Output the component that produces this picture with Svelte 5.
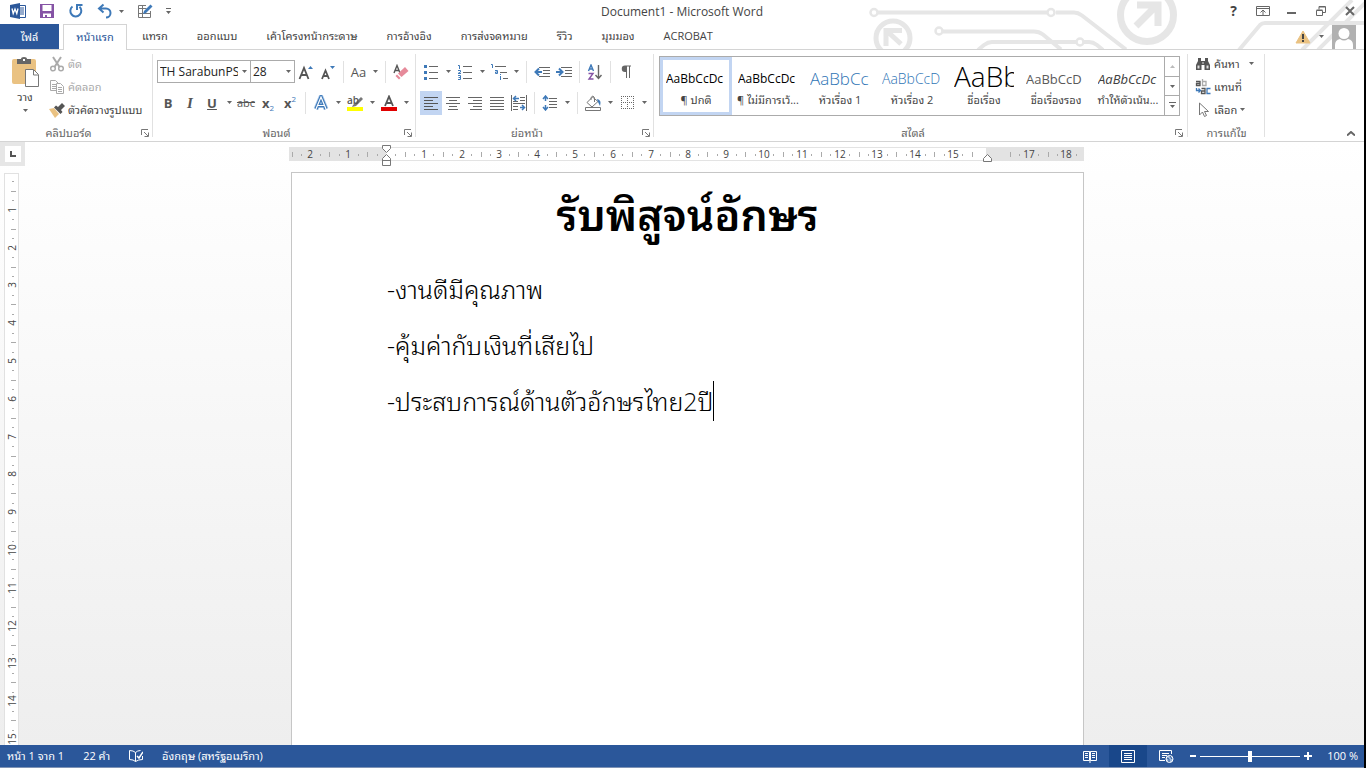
<script lang="ts">
  type Style = { sample: string; name: string; kind: string };

  const tabs = ['แทรก', 'ออกแบบ', 'เค้าโครงหน้ากระดาษ', 'การอ้างอิง', 'การส่งจดหมาย', 'รีวิว', 'มุมมอง', 'ACROBAT'];

  const styles: Style[] = [
    { sample: 'AaBbCcDc', name: '¶ ปกติ', kind: 'normal' },
    { sample: 'AaBbCcDc', name: '¶ ไม่มีการเว้...', kind: 'normal' },
    { sample: 'AaBbCc', name: 'หัวเรื่อง 1', kind: 'heading1' },
    { sample: 'AaBbCcD', name: 'หัวเรื่อง 2', kind: 'heading2' },
    { sample: 'AaBb', name: 'ชื่อเรื่อง', kind: 'title' },
    { sample: 'AaBbCcD', name: 'ชื่อเรื่องรอง', kind: 'subtitle' },
    { sample: 'AaBbCcDc', name: 'ทำให้ตัวเน้น...', kind: 'emphasis' },
  ];

  const lines = ['-งานดีมีคุณภาพ', '-คุ้มค่ากับเงินที่เสียไป', '-ประสบการณ์ด้านตัวอักษรไทย2ปี'];

  let selected = $state(0);
  let zoom = $state(100);

  // ruler steps are quarters of a centimetre, 378px for every 10cm
  const place = (quarter: number, origin: number) => origin + Math.round((quarter * 378) / 40);

  const across = Array.from({ length: 84 }, (_, i) => i - 10)
    .filter((q) => q !== 0 && (q < 63 || q > 65))
    .map((q) => ({ q, at: place(q, 97) }));
  const down = Array.from({ length: 100 }, (_, i) => i + 1).map((q) => ({ q, at: place(q, -2) }));
</script>

{#snippet arrow()}
  <svg class="arrow" width="5" height="3" viewBox="0 0 5 3"><path d="M0 0h5L2.5 3z" fill="#666" /></svg>
{/snippet}

{#snippet drop(label: string)}
  <button class="drop" aria-label={label}>{@render arrow()}</button>
{/snippet}

{#snippet launcher(label: string)}
  <button class="launcher" aria-label={label}>
    <svg width="8" height="8" viewBox="0 0 8 8" fill="none" stroke="#777"><path d="M.5 6V.5H7M3 3l4 4M7.5 3.5v4h-4" /></svg>
  </button>
{/snippet}

<div class="word">
  <header>
    <svg class="circuit" width="504" height="49" viewBox="0 0 504 49" fill="none" stroke="#e6e6e6" stroke-width="4">
      <circle cx="14" cy="12.5" r="3.5" stroke-width="2.5" />
      <path d="M18 12.5h169M196 12.5h18q4 0 8 3l44 34" />
      <circle cx="191" cy="12.5" r="3.5" stroke-width="2.5" />
      <circle cx="33" cy="38" r="17" stroke-width="5" />
      <path d="M41 44L28 32M26 46V30.5h16" stroke-width="5" />
      <circle cx="79" cy="31" r="3.5" stroke-width="2.5" />
      <path d="M83 31.5h91q5 0 9 3l18 15M118 50l6-5q4-3 8-3h84M224 42h5q4 0 8 3l6 5" />
      <circle cx="220" cy="42" r="3.5" stroke-width="2.5" />
      <circle cx="287" cy="15" r="26.5" stroke-width="7" />
      <path d="M276 26l19-19M277 5h21v21" stroke-width="7" />
      <path d="M379 50l21-25q2-2 5-2h101M442 50l50-50M458 50l50-50" />
    </svg>

    <div class="titlebar">
      <div class="quick">
        <svg class="logo" width="18" height="18" viewBox="0 0 18 18">
          <path d="M9 3.5h7.5v12H9" fill="#fff" stroke="#2b579a" />
          <path d="M11 6h4M11 8h4M11 10h4M11 12h4" stroke="#2b579a" />
          <path d="M1 3l10-2v16L1 15z" fill="#2b579a" />
          <path d="M3 6.5l1.2 5L6 7l1.8 4.5L9 6.5" fill="none" stroke="#fff" stroke-width="1.3" />
        </svg>
        <button class="quick-button" aria-label="บันทึก">
          <svg width="16" height="16" viewBox="0 0 16 16"><path d="M1 1h14v14H1z" fill="#8553a5" /><path d="M3.5 2h9v6h-9zM4 10.5h8V14H8v-2H6v2H4z" fill="#fff" /></svg>
        </button>
        <button class="quick-button" aria-label="ทำซ้ำ">
          <svg width="16" height="16" viewBox="0 0 16 16" fill="none" stroke="#3e79b8" stroke-width="2"><path d="M4.5 3.5A5.5 5.500 0 1 0 11.5 3.8M9 7V2h5.500" /></svg>
        </button>
        <button class="quick-button" aria-label="เลิกทำ">
          <svg width="16" height="16" viewBox="0 0 16 16" fill="none" stroke="#3e79b8" stroke-width="2"><path d="M6.5 1.5L2 5.5l4.500 4M2.5 5.500H9a4.500 4.500 0 0 1 0 9" /></svg>
        </button>
        <span class="undo-arrow">{@render arrow()}</span>
        <button class="quick-button" aria-label="วาดตาราง">
          <svg width="16" height="16" viewBox="0 0 16 16" fill="none" stroke="#777"><path d="M9 2.5H1.5v12h12V8M1.5 5.5h8M1.5 10.5h12M5.5 3v11.5" /><path d="M6 11l1-3 6.5-6.5 2 2L9 10z" fill="#3e79b8" stroke="none" /></svg>
        </button>
        <button class="customize" aria-label="กำหนดแถบเครื่องมือด่วน">
          <svg width="7" height="7" viewBox="0 0 7 7"><path d="M1 0h5v1H1zM1 3h5L3.5 6z" fill="#666" /></svg>
        </button>
      </div>
      <h1>Document1 - Microsoft Word</h1>
      <div class="window-buttons">
        <button aria-label="วิธีใช้"><b>?</b></button>
        <button aria-label="ตัวเลือกการแสดง Ribbon">
          <svg width="14" height="10" viewBox="0 0 14 10" fill="none" stroke="#666"><path d="M.5.5h13v9H.5zM1 2.5h12M7 9V4.5M4.5 6.5L7 4l2.5 2.5" /></svg>
        </button>
        <button aria-label="ย่อเล็กสุด"><svg width="10" height="10" viewBox="0 0 10 10"><path d="M0 6h9v2H0z" fill="#666" /></svg></button>
        <button aria-label="คืนค่าลง">
          <svg width="10" height="10" viewBox="0 0 10 10" fill="none" stroke="#666"><path d="M.5 4.5h6v5h-6zM.5 4h6M3 3.5v-3h6.5v6H7M3 1h6" /></svg>
        </button>
        <button aria-label="ปิด"><svg width="10" height="10" viewBox="0 0 10 10" stroke="#666" stroke-width="2"><path d="M1 1l8 8M9 1L1 9" /></svg></button>
      </div>
    </div>

    <div class="tabs">
      <button class="file">ไฟล์</button>
      <button class="tab active">หน้าแรก</button>
      {#each tabs as tab}
        <button class="tab">{tab}</button>
      {/each}
      <div class="account">
        <svg width="16" height="14" viewBox="0 0 16 14"><path d="M8 1l7 12H1z" fill="#eac282" stroke="#eac282" stroke-linejoin="round" /><path d="M7 4h2v5H7zM7 10h2v2H7z" fill="#444" /></svg>
        {@render arrow()}
        <svg width="24" height="24" viewBox="0 0 24 24"><path d="M0 0h24v24H0z" fill="#b1b1b1" /><circle cx="12" cy="8.5" r="5.5" fill="#fff" /><path d="M3 24v-4q0-5 5-6 4 3 8 0 5 1 5 6v4z" fill="#fff" /></svg>
      </div>
    </div>
  </header>

  <div class="ribbon">
    <section class="group clipboard">
      <div class="group-body">
        <button class="paste">
          <svg width="30" height="32" viewBox="0 0 30 32">
            <path d="M2 5q0-2 2-2h20q2 0 2 2v23H4q-2 0-2-2z" fill="#eac282" />
            <path d="M7 3h4q0-2 3-2t3 2h4v5H7z" fill="#666" /><path d="M13 3h2v2h-2z" fill="#fff" />
            <path d="M15.5 13.5h8l5 5v12h-13z" fill="#fff" stroke="#777" /><path d="M23.5 14v5H28" fill="none" stroke="#777" />
          </svg>
          <span>วาง</span>
          {@render arrow()}
        </button>
        <div class="commands">
          <button class="command" disabled>
            <svg width="16" height="16" viewBox="0 0 16 16" fill="none" stroke="#aaa" stroke-width="1.5"><path d="M4 1l6.5 10M12 1L5.5 11" stroke-width="2" /><circle cx="4" cy="12.5" r="2.3" /><circle cx="12" cy="12.5" r="2.3" /></svg>
            ตัด
          </button>
          <button class="command" disabled>
            <svg width="16" height="16" viewBox="0 0 16 16" fill="#fff" stroke="#aaa"><path d="M1.5 1.5h5l3 3v7h-8zM3 5.5h4M3 7.5h4M3 9.5h4" /><path d="M7.5 4.5h4l3 3v7h-7zM9 8.5h4M9 10.5h4M9 12.5h4" /></svg>
            คัดลอก
          </button>
          <button class="command">
            <svg width="16" height="16" viewBox="0 0 16 16"><path d="M0 7l5-1 5 6-4 4z" fill="#eac282" /><path d="M5 5.5l2-2L9 5l4-4 3 3-4 4 1.500 2-2 2z" fill="#555" /></svg>
            ตัวคัดวางรูปแบบ
          </button>
        </div>
      </div>
      <footer><h2>คลิปบอร์ด</h2>{@render launcher('คลิปบอร์ด')}</footer>
    </section>

    <section class="group font">
      <div class="group-body rows">
        <div class="row">
          <div class="combo wide"><input aria-label="แบบอักษร" value="TH SarabunPSK" />{@render drop('เลือกแบบอักษร')}</div>
          <div class="combo"><input aria-label="ขนาดแบบอักษร" value="28" />{@render drop('เลือกขนาด')}</div>
          <button class="tool" aria-label="ขยายแบบอักษร">
            <svg width="16" height="16" viewBox="0 0 16 16"><path d="M1.5 15L6 4l4.5 11M3 11h6" fill="none" stroke="#555" stroke-width="1.8" /><path d="M10 5l2.500-3L15 5z" fill="#3e79b8" /></svg>
          </button>
          <button class="tool" aria-label="ย่อแบบอักษร">
            <svg width="16" height="16" viewBox="0 0 16 16"><path d="M2 15L5.500 6.500 9 15M3 12h5" fill="none" stroke="#555" stroke-width="1.8" /><path d="M10 2l2.500 3L15 2z" fill="#3e79b8" /></svg>
          </button>
          <i class="split"></i>
          <button class="tool case" aria-label="เปลี่ยนตัวพิมพ์">Aa</button>{@render drop('ตัวเลือกตัวพิมพ์')}
          <i class="split"></i>
          <button class="tool" aria-label="ล้างการจัดรูปแบบ">
            <svg width="16" height="16" viewBox="0 0 16 16"><path d="M1 9l3-7.500L7 9M2 6.500h4" fill="none" stroke="#555" stroke-width="1.4" /><path d="M5 9.500L12 3l3.500 4L8.500 13z" fill="#e68a9a" /><path d="M4 10.500L7.500 14 6 15.500 2.500 12z" fill="#e68a9a" /></svg>
          </button>
        </div>
        <div class="row">
          <button class="tool"><b>B</b></button>
          <button class="tool"><b class="italic">I</b></button>
          <button class="tool"><b class="under">U</b></button>{@render drop('ลักษณะเส้นใต้')}
          <button class="tool strike">abc</button>
          <button class="tool script"><b>x</b><sub>2</sub></button>
          <button class="tool script"><b>x</b><sup>2</sup></button>
          <i class="split"></i>
          <button class="tool" aria-label="ลักษณะพิเศษข้อความ">
            <svg width="16" height="16" viewBox="0 0 16 16" fill="none"><path d="M3 14L8 2l5 12M5 10.5h6" stroke="#b5d0ee" stroke-width="5" /><path d="M3 14L8 2l5 12M5 10.5h6" stroke="#3e79b8" stroke-width="3.4" /><path d="M3 14L8 2l5 12M5 10.5h6" stroke="#fff" stroke-width="1.2" /></svg>
          </button>{@render drop('ตัวเลือกลักษณะพิเศษ')}
          <button class="tool marker-tool" aria-label="สีเน้นข้อความ">
            <span>ab</span>
            <svg width="16" height="16" viewBox="0 0 16 16"><path d="M6 10l8-8 2 2-7 7-4 1z" fill="#777" /><path d="M0 12h16v4H0z" fill="#ff0" /></svg>
          </button>{@render drop('เลือกสีเน้น')}
          <button class="tool" aria-label="สีแบบอักษร">
            <svg width="16" height="16" viewBox="0 0 16 16"><path d="M4 11l4-9.500L12 11M5.500 8h5" fill="none" stroke="#555" stroke-width="1.8" /><path d="M0 12h16v4H0z" fill="#e00000" /></svg>
          </button>{@render drop('เลือกสีแบบอักษร')}
        </div>
      </div>
      <footer><h2>ฟอนต์</h2>{@render launcher('ฟอนต์')}</footer>
    </section>

    <section class="group paragraph">
      <div class="group-body rows">
        <div class="row">
          <button class="tool" aria-label="สัญลักษณ์แสดงหัวข้อย่อย">
            <svg width="16" height="16" viewBox="0 0 16 16"><path d="M6 2.5h9M6 8.5h9M6 14.5h9" stroke="#666" /><path d="M1 1h3v3H1zM1 7h3v3H1zM1 13h3v3H1z" fill="#3e79b8" /></svg>
          </button>{@render drop('ไลบรารีสัญลักษณ์')}
          <button class="tool" aria-label="ลำดับเลข">
            <svg width="16" height="16" viewBox="0 0 16 16" fill="none"><path d="M6 2.5h9M6 8.5h9M6 14.5h9" stroke="#666" /><path d="M1 1.500h1.500V5M1 6.500h2.500v1.500L1 9.500h3M1 11.500h2.500v4H1M1.500 13.500h2" stroke="#3e79b8" /></svg>
          </button>{@render drop('ไลบรารีลำดับเลข')}
          <button class="tool" aria-label="รายการหลายระดับ">
            <svg width="18" height="16" viewBox="0 0 18 16" fill="none"><path d="M5 2.5h11M10 8.5h7M13 14.5h5" stroke="#666" /><path d="M1 .5h1.500V4M5 6.500h2.500v3H5.500v-1.500h2M10.500 10v1M10.500 12v4" stroke="#3e79b8" /></svg>
          </button>{@render drop('ไลบรารีหลายระดับ')}
          <i class="split"></i>
          <button class="tool" aria-label="ลดการเยื้อง">
            <svg width="16" height="16" viewBox="0 0 16 16" fill="none"><path d="M5 3.5h11M9 6.5h7M9 9.5h7M5 12.5h11" stroke="#666" /><path d="M8 8H1.5M5 4.5L1.5 8 5 11.500" stroke="#3e79b8" stroke-width="2" /></svg>
          </button>
          <button class="tool" aria-label="เพิ่มการเยื้อง">
            <svg width="16" height="16" viewBox="0 0 16 16" fill="none"><path d="M5 3.5h11M9 6.5h7M9 9.5h7M5 12.5h11" stroke="#666" /><path d="M0 8h6.500M3 4.500L6.500 8 3 11.500" stroke="#3e79b8" stroke-width="2" /></svg>
          </button>
          <i class="split"></i>
          <button class="tool" aria-label="เรียงลำดับ">
            <svg width="16" height="16" viewBox="0 0 16 16" fill="none"><path d="M1.500 7L4 1l2.500 6M2.500 5h3" stroke="#3e79b8" stroke-width="1.4" /><path d="M1.500 9.500h4.500L2 15h4.500" stroke="#8553a5" stroke-width="1.4" /><path d="M11.500 1v13M8.500 11l3 3.500 3-3.500" stroke="#666" stroke-width="1.4" /></svg>
          </button>
          <i class="split"></i>
          <button class="tool" aria-label="แสดง/ซ่อน">
            <svg width="14" height="14" viewBox="0 0 14 14"><path d="M7 7H6A3 3 0 0 1 6 .500h6v1h-1V13h-1V1.500H8V13H7z" fill="#666" /></svg>
          </button>
        </div>
        <div class="row">
          <button class="tool on" aria-label="จัดชิดซ้าย">
            <svg width="16" height="14" viewBox="0 0 16 14" stroke="#555"><path d="M1 1.5h14M1 4.5h9M1 7.5h14M1 10.5h9M1 13.5h14" /></svg>
          </button>
          <button class="tool" aria-label="จัดกึ่งกลาง">
            <svg width="16" height="14" viewBox="0 0 16 14" stroke="#666"><path d="M1 1.5h14M4 4.5h8M1 7.5h14M4 10.5h8M3 13.5h10" /></svg>
          </button>
          <button class="tool" aria-label="จัดชิดขวา">
            <svg width="16" height="14" viewBox="0 0 16 14" stroke="#666"><path d="M1 1.5h14M6 4.5h9M1 7.5h14M6 10.5h9M3 13.5h12" /></svg>
          </button>
          <button class="tool" aria-label="จัดเต็มแนว">
            <svg width="16" height="14" viewBox="0 0 16 14" stroke="#666"><path d="M1 1.5h14M1 4.5h14M1 7.5h14M1 10.5h14M1 13.5h14" /></svg>
          </button>
          <button class="tool" aria-label="จัดแบบกระจาย">
            <svg width="16" height="16" viewBox="0 0 16 16" fill="none" stroke="#666"><path d="M.5 0v16M15.5 0v16M9 2.5h5M9 5.5h5M2 8.5h12M2 11.5h5M2 14.5h5M2 6.5h5" /><path d="M8 3.5H3M5 1L2.5 3.5 5 6M9 12.5h4M11 10l2.5 2.5L11 15" stroke="#3e79b8" stroke-width="1.5" /></svg>
          </button>
          <i class="split"></i>
          <button class="tool" aria-label="ระยะห่างบรรทัด">
            <svg width="16" height="16" viewBox="0 0 16 16" fill="none"><path d="M7 3.5h8M7 6.5h8M7 9.5h8M7 12.5h8" stroke="#666" /><path d="M3.5 1v5M3.5 10v5M1 4l2.5-3L6 4M1 12l2.5 3L6 12" stroke="#3e79b8" stroke-width="1.5" /></svg>
          </button>{@render drop('ตัวเลือกระยะห่าง')}
          <i class="split"></i>
          <button class="tool" aria-label="แรเงา">
            <svg width="17" height="16" viewBox="0 0 17 16" fill="none" stroke="#777"><path d="M7.5 2L2 7.5 7 12l6-5.5zM6 5V2.5q2-3 3.5 0V7M.5 12.5h15v3H.5z" /><path d="M12 4q5 1 3 7l-2-4z" fill="#3e79b8" stroke="none" /></svg>
          </button>{@render drop('เลือกสีแรเงา')}
          <button class="tool" aria-label="เส้นขอบ">
            <svg width="13" height="13" viewBox="0 0 13 13" fill="none" stroke="#666" stroke-dasharray="1 1"><path d="M0 .5h13M0 6.5h13M0 12.5h13M.5 0v13M6.5 0v13M12.5 0v13" /></svg>
          </button>{@render drop('เลือกเส้นขอบ')}
        </div>
      </div>
      <footer><h2>ย่อหน้า</h2>{@render launcher('ย่อหน้า')}</footer>
    </section>

    <section class="group styles">
      <div class="group-body">
        <div class="gallery">
          {#each styles as style, i}
            <button class="style" class:selected={selected === i} onclick={() => (selected = i)}>
              <span class="sample {style.kind}">{style.sample}</span>
              <span class="style-name">{style.name}</span>
            </button>
          {/each}
          <div class="scroller">
            <button disabled aria-label="แถวก่อนหน้า"><svg width="5" height="3" viewBox="0 0 5 3"><path d="M0 3h5L2.5 0z" fill="#bbb" /></svg></button>
            <button aria-label="แถวถัดไป">{@render arrow()}</button>
            <button aria-label="เพิ่มเติม"><svg width="7" height="7" viewBox="0 0 7 7"><path d="M0 0h7v1H0zM1 3h5L3.5 6z" fill="#666" /></svg></button>
          </div>
        </div>
      </div>
      <footer><h2>สไตล์</h2>{@render launcher('สไตล์')}</footer>
    </section>

    <section class="group editing">
      <div class="group-body commands">
        <button class="command">
          <svg width="16" height="16" viewBox="0 0 16 16" fill="#555"><path d="M3 2h3v3h4V2h3v3l2 4v5H9.5V9h-3v5H1V9l2-4z" /><path d="M2.5 9.5h2v3h-2zM11.5 9.5h2v3h-2zM7.5 6h1v2h-1z" fill="#ddd" /></svg>
          ค้นหา <span class="far">{@render arrow()}</span>
        </button>
        <button class="command">
          <svg width="16" height="16" viewBox="0 0 16 16" fill="none" stroke-width="1.300"><path d="M1 2.500h4v4H1.500v-2H5M6.500 9.500h3.500v5H6.500v-2.500H10" stroke="#555" /><path d="M7.500 0v6.500H11v-4H7.500" stroke="#aaa" /><path d="M15.500 9.500h-3.500v5h3.500M1.500 9v2.500H5M3.500 9.500l2 2-2 2" stroke="#3e79b8" /></svg>
          แทนที่
        </button>
        <button class="command">
          <svg width="16" height="16" viewBox="0 0 16 16"><path d="M4.5 1v12l3-3 2 4.500 2-1-2-4h4z" fill="#fff" stroke="#777" /></svg>
          เลือก {@render arrow()}
        </button>
      </div>
      <footer><h2>การแก้ไข</h2></footer>
    </section>

    <button class="collapse" aria-label="ยุบ Ribbon">
      <svg width="8" height="5" viewBox="0 0 8 5" fill="none" stroke="#666" stroke-width="2"><path d="M0 4.5l4-3.5 4 3.5" /></svg>
    </button>
  </div>

  <main>
    <aside>
      <button class="corner" aria-label="ตัวหยุดแท็บ"><span><svg width="6" height="6" viewBox="0 0 6 6"><path d="M0 0h2v4h4v2H0z" fill="#555" /></svg></span></button>
      <div class="ruler-down">
        <svg width="13" height="945" viewBox="0 0 13 945">
          {#each down as { q, at }}
            {#if q % 4 === 0}
              <text transform="rotate(-90 11 {at})" x="11" y={at} text-anchor="middle">{q / 4}</text>
            {:else if q % 4 === 2}
              <path d="M6 {at}.5h5" />
            {:else}
              <path d="M7 {at}.5h2" />
            {/if}
          {/each}
        </svg>
      </div>
    </aside>
    <div class="canvas">
      <svg class="ruler" width="797" height="23" viewBox="0 0 797 23">
        <path class="edge" d="M0 4h795v14H0z" />
        <path class="track" d="M97 5h600v12H97z" />
        {#each across as { q, at }}
          {#if q % 4 === 0}
            <text x={at} y="15" text-anchor="middle">{Math.abs(q / 4)}</text>
          {:else if q % 4 === 2 || q % 4 === -2}
            <path d="M{at}.5 9v5" />
          {:else}
            <path d="M{at}.5 11v2" />
          {/if}
        {/each}
        <path class="marker" d="M93.5 2.5h8v3l-4 4-4-4zM97.5 11.5l4 4v7h-8v-7zM93.5 17.5h8" />
        <path class="marker" d="M698.5 11.5l4 4v3h-8v-3z" />
      </svg>
      <article class="page">
        <h3>รับพิสูจน์อักษร</h3>
        {#each lines as line, i}
          <p>{line}{#if i === lines.length - 1}<span class="caret"></span>{/if}</p>
        {/each}
      </article>
    </div>
  </main>

  <div class="status">
    <span>หน้า 1 จาก 1</span>
    <span>22 คำ</span>
    <svg width="14" height="14" viewBox="1 0 14 14" fill="none" stroke="#fff"><path d="M7.5 12.5q-2-2-6-2v-9q4 0 6 2 2-2 5-2M7.5 3.5v9M14.5 7v3.5q-4 0-7 2" /><path d="M9 7l2 2 4-6" stroke-width="1.5" /></svg>
    <span>อังกฤษ (สหรัฐอเมริกา)</span>
    <div class="views">
      <button aria-label="โหมดการอ่าน">
        <svg width="14" height="13" viewBox="0 0 14 13" fill="none" stroke="#fff"><path d="M.5 1.5h6v9h-6zM7.5 1.5h6v9h-6zM7 1v12M2 3.5h3M2 5.5h3M2 7.5h3M9 3.5h3M9 5.5h3M9 7.5h3" /></svg>
      </button>
      <button class="current" aria-label="เค้าโครงเหมือนพิมพ์">
        <svg width="14" height="13" viewBox="0 0 14 13" fill="none" stroke="#fff"><path d="M.5.5h13v12H.5zM3 3.5h8M3 5.5h8M3 7.5h8M3 9.5h8" /></svg>
      </button>
      <button aria-label="เค้าโครงเว็บ">
        <svg width="15" height="13" viewBox="0 0 15 13" fill="none" stroke="#fff"><path d="M12.5 4V.5H.5v10H6M3 3.5h7M3 5.5h5M3 7.5h3" /><circle cx="10.5" cy="9" r="3.5" fill="#9db8dc" /><path d="M8 8l2 1v3M11 6l2 3" stroke="#2b579a" /></svg>
      </button>
      <button class="step" aria-label="ย่อ" onclick={() => (zoom -= 10)}><svg width="8" height="8" viewBox="0 0 8 8"><path d="M1 3h6v2H1z" fill="#fff" /></svg></button>
      <input type="range" aria-label="ย่อ/ขยาย" min="10" max="190" bind:value={zoom} />
      <button class="step" aria-label="ขยาย" onclick={() => (zoom += 10)}><svg width="8" height="8" viewBox="0 0 8 8"><path d="M3 0h2v3h3v2H5v3H3V5H0V3h3z" fill="#fff" /></svg></button>
      <span class="percent">{zoom} %</span>
    </div>
  </div>
</div>

<style>
  :global(body) {
    margin: 0;
  }

  .word {
    display: flex;
    flex-direction: column;
    height: 100vh;
    box-sizing: border-box;
    overflow: hidden;
    border-right: 2px solid #000;
    background: #fff;
    color: #444;
    font: 12px/16px "Open Sans", "Noto Sans Thai Looped", "Loma", "Noto Sans Thai", "Noto Sans", sans-serif;
  }

  button,
  input {
    margin: 0;
    padding: 0;
    border: 0;
    background: none;
    color: inherit;
    font: inherit;
  }

  button {
    display: flex;
    align-items: center;
    justify-content: center;
    white-space: nowrap;
  }

  svg {
    display: block;
    flex: none;
  }

  h1,
  h2,
  h3,
  p {
    margin: 0;
    font: inherit;
  }

  header {
    position: relative;
    flex: none;
    border-bottom: 1px solid #d4d4d4;
  }

  .circuit {
    position: absolute;
    top: 0;
    right: 0;
  }

  .titlebar {
    position: relative;
    display: grid;
    grid-template-columns: 1fr auto 1fr;
    align-items: center;
    height: 24px;
  }

  .titlebar h1 {
    padding-bottom: 1px;
  }

  .quick {
    display: flex;
    align-items: center;
    padding: 0 0 2px 9px;
  }

  .logo {
    margin-right: 5px;
  }

  .quick-button {
    width: 29px;
  }

  .undo-arrow {
    padding-right: 6px;
  }

  .customize {
    width: 18px;
  }

  .window-buttons {
    display: flex;
    justify-content: flex-end;
    padding-bottom: 2px;
  }

  .window-buttons button {
    width: 29px;
    height: 22px;
    font-size: 14px;
  }

  .tabs {
    position: relative;
    display: flex;
    gap: 1px;
    height: 25px;
    font-size: 11px;
  }

  .file {
    width: 59px;
    margin-right: 3px;
    background: #2b579a;
    color: #fff;
  }

  .tab {
    padding: 0 14px 2px;
  }

  .active {
    box-sizing: border-box;
    width: 64px;
    height: 26px;
    padding: 0 0 2px;
    border: 1px solid #d4d4d4;
    border-bottom: 0;
    background: #fff;
    color: #2b579a;
  }

  .account {
    display: flex;
    align-items: center;
    gap: 8px;
    margin-left: auto;
    padding-right: 8px;
  }

  .ribbon {
    display: flex;
    flex: none;
    border-bottom: 1px solid #d4d4d4;
  }

  .group {
    display: flex;
    flex-direction: column;
    position: relative;
    box-sizing: border-box;
    height: 91px;
    padding: 0 4px;
  }

  .group::after {
    content: "";
    position: absolute;
    top: 4px;
    right: 0;
    bottom: 4px;
    border-right: 1px solid #e1e1e1;
  }

  .clipboard {
    width: 153px;
  }

  .font {
    width: 263px;
  }

  .paragraph {
    width: 238px;
  }

  .styles {
    width: 534px;
    padding: 0 5px;
  }

  .editing {
    width: 77px;
  }

  .group-body {
    display: flex;
    box-sizing: border-box;
    height: 75px;
  }

  .group footer {
    display: flex;
    height: 16px;
    color: #666;
  }

  .group footer h2 {
    flex: 1;
    text-align: center;
    font-size: 11px;
  }

  .group:not(.editing) footer h2 {
    padding-right: 8px;
  }

  .launcher {
    width: 8px;
  }

  .paste {
    flex-direction: column;
    justify-content: flex-start;
    width: 42px;
    padding-top: 6px;
    font-size: 11px;
  }

  .paste span {
    margin: 1px 0 4px;
  }

  .commands {
    display: flex;
    flex-direction: column;
    padding-top: 2px;
  }

  .command {
    justify-content: flex-start;
    gap: 3px;
    height: 23px;
    padding-left: 3px;
    font-size: 11px;
  }

  .command:disabled {
    color: #aaa;
  }

  .far {
    padding-left: 6px;
  }

  .rows {
    flex-direction: column;
    padding-top: 6px;
  }

  .row {
    display: flex;
    align-items: center;
    height: 31px;
  }

  .tool {
    width: 22px;
    height: 24px;
    font-size: 13px;
    color: #555;
  }

  .on {
    background: #c2d5f2;
  }

  .drop {
    width: 12px;
    height: 24px;
  }

  .split {
    width: 1px;
    height: 22px;
    margin: 0 4px;
    background: #e1e1e1;
  }

  .case {
    font-size: 13px;
  }

  .italic {
    font-family: "Liberation Serif", serif;
    font-size: 15px;
    font-style: italic;
  }

  .under {
    text-decoration: underline;
  }

  .strike {
    font-size: 11px;
    text-decoration: line-through;
  }

  .script sub,
  .script sup {
    color: #3e79b8;
    font-size: 8px;
    line-height: 10px;
  }

  .script sub {
    padding-top: 10px;
  }

  .script sup {
    padding-bottom: 8px;
  }

  .marker-tool {
    position: relative;
  }

  .marker-tool span {
    position: absolute;
    top: 1px;
    left: 3px;
    font-size: 10px;
    font-weight: 600;
  }

  .combo {
    display: flex;
    box-sizing: border-box;
    width: 44px;
    height: 23px;
    border: 1px solid #ababab;
  }

  .combo + .combo {
    border-left: 0;
  }

  .combo input {
    flex: 1;
    min-width: 0;
    padding-left: 2px;
    color: #222;
  }

  .combo .drop {
    height: 21px;
  }

  .wide {
    width: 94px;
  }

  .gallery {
    display: flex;
    box-sizing: border-box;
    width: 521px;
    height: 60px;
    margin-top: 6px;
    border: 1px solid #ababab;
  }

  .style {
    box-sizing: border-box;
    flex-direction: column;
    width: 72px;
    padding: 0 3px;
    border: 3px solid transparent;
  }

  .selected {
    border-color: #c2d5f2;
  }

  .sample {
    width: 60px;
    height: 28px;
    overflow: hidden;
    color: #000;
    text-align: left;
    line-height: 30px;
  }

  .style-name {
    font-size: 11px;
  }

  .heading1,
  .heading2 {
    color: #2e74b5;
    font-size: 17px;
    font-weight: 300;
  }

  .heading2 {
    font-size: 14px;
  }

  .title {
    font-size: 28px;
    font-weight: 300;
    line-height: 24px;
  }

  .subtitle {
    color: #5a5a5a;
    font-size: 13px;
  }

  .emphasis {
    color: #404040;
    font-size: 13px;
    font-style: italic;
  }

  .scroller {
    display: flex;
    flex: 1;
    flex-direction: column;
    border-left: 1px solid #ababab;
  }

  .scroller button {
    flex: 1;
  }

  .scroller button + button {
    border-top: 1px solid #ababab;
  }

  .collapse {
    align-self: flex-end;
    height: 16px;
    margin-left: auto;
    padding-right: 9px;
  }

  main {
    display: flex;
    flex: 1;
    min-height: 0;
    background: linear-gradient(#fff, #eee);
  }

  aside {
    display: flex;
    flex-direction: column;
    width: 25px;
    overflow: hidden;
  }

  .corner {
    flex: none;
    width: 25px;
    height: 24px;
    background: #e6e6e6;
  }

  .corner span {
    display: flex;
    align-items: center;
    justify-content: center;
    width: 16px;
    height: 16px;
    background: #fff;
  }

  .ruler-down {
    flex: 1;
    width: 13px;
    min-height: 0;
    margin: 7px 0 0 4px;
    overflow: hidden;
    border: 1px solid #e1e1e1;
    border-bottom: 0;
    background: #fff;
  }

  .ruler,
  .ruler-down svg {
    font-size: 10px;
    fill: #444;
    stroke: none;
  }

  .ruler path,
  .ruler-down path {
    stroke: #aaa;
  }

  .ruler .edge {
    fill: #e3e3e3;
    stroke: none;
  }

  .ruler .track {
    fill: #fff;
    stroke: none;
  }

  .ruler .marker {
    fill: #fff;
    stroke: #777;
  }

  .canvas {
    display: flex;
    flex: 1;
    flex-direction: column;
    align-items: center;
    gap: 6px;
    min-width: 0;
    padding: 1px 14px 0 0;
  }

  .ruler {
    overflow: visible;
  }

  .page {
    box-sizing: border-box;
    flex: 1;
    width: 793px;
    padding: 6px 95px 0;
    border: 1px solid #c6c6c6;
    border-bottom: 0;
    background: #fff;
    color: #000;
    font-size: 25px;
  }

  .page h3 {
    height: 82px;
    font-size: 43px;
    font-weight: 600;
    line-height: 72px;
    text-align: center;
  }

  .page p {
    display: flex;
    align-items: center;
    height: 56px;
    font-weight: 300;
    white-space: nowrap;
  }

  .caret {
    width: 1px;
    height: 40px;
    background: #000;
  }

  .status {
    display: flex;
    flex: none;
    align-items: center;
    gap: 19px;
    height: 22px;
    padding-left: 7px;
    border-bottom: 1px solid #7f93b5;
    background: #2b579a;
    color: #fff;
    font-size: 11px;
  }

  .views {
    display: flex;
    align-items: center;
    margin-left: auto;
    padding-right: 6px;
  }

  .views button {
    width: 38px;
    height: 22px;
  }

  .views .current {
    background: #19478a;
  }

  .views .step {
    width: 15px;
  }

  .views input {
    width: 100px;
    height: 22px;
    appearance: none;
    background: linear-gradient(#fff, #fff) center / 100% 1px no-repeat;
  }

  .views input::-webkit-slider-thumb {
    appearance: none;
    width: 4px;
    height: 11px;
    background: #fff;
  }

  .percent {
    padding-left: 12px;
  }
</style>
